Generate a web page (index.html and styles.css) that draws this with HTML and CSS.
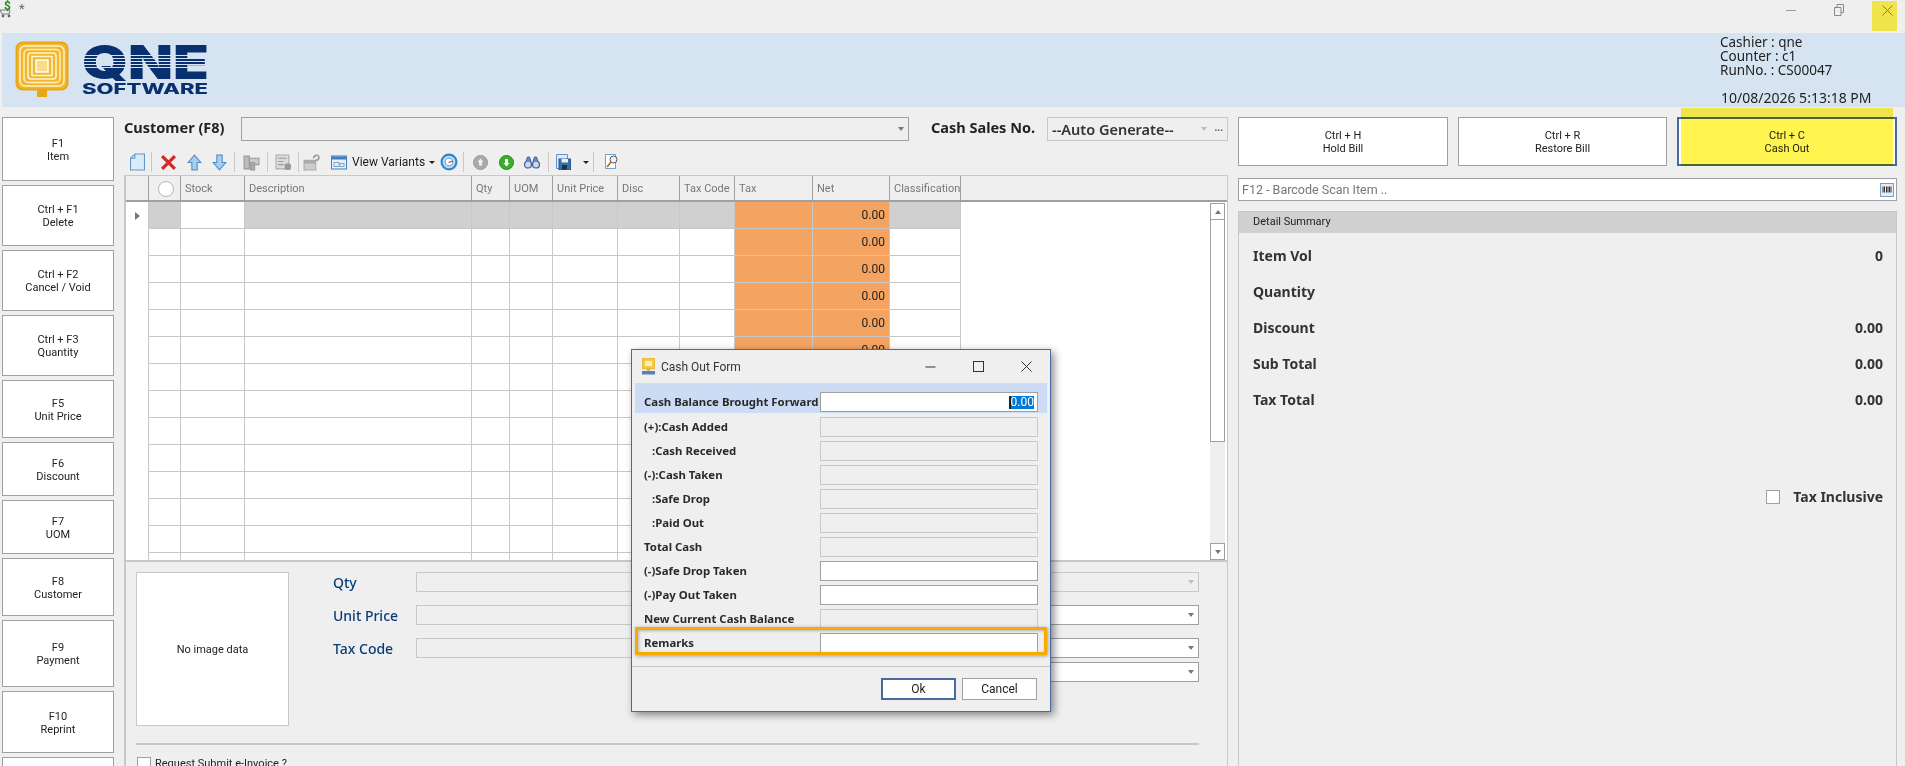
FILE: index.html

```html
<!DOCTYPE html>
<html lang="en">
<head>
  <meta charset="UTF-8" />
  <title>QNE Software - POS</title>
  <link rel="stylesheet" href="styles.css">
</head>
<body>

<div class="titlebar">
  <div class="app-icon">
    <svg width="14" height="16" viewBox="0 0 14 16"><path d="M0 8h10l-1 4H2z" fill="none" stroke="#777" stroke-width="1"/><circle cx="3" cy="14" r="1.400" fill="#666"/><circle cx="9" cy="14" r="1.400" fill="#666"/></svg>
    <span class="app-dollar">$</span>
  </div>
  <span class="star">*</span>
  <div class="win-btns">
    <svg class="win-min" width="10" height="10" viewBox="0 0 10 10"><path d="M0 5.500h10" stroke="#999" stroke-width="1"/></svg>
    <svg class="win-restore" width="10" height="12" viewBox="0 0 10 12"><path d="M.5 3.500h6.500v8H.5zM3 3.500V.5h6.500v8H7" fill="none" stroke="#888"/></svg>
    <svg class="win-close" width="11" height="11" viewBox="0 0 11 11"><path d="M.5.500l10 10M10.500.5l-10 10" stroke="#8a8a60" stroke-width="1"/></svg>
  </div>
</div>

<header class="banner">
  <svg class="logo" width="200" height="66" viewBox="0 0 200 66">
    <rect x="1.500" y="1.500" width="51" height="47" rx="6" fill="#f2b632" stroke="#e6a817" stroke-width="2"/>
    <rect x="5" y="5" width="44" height="40" rx="5" fill="none" stroke="#fff3c4" stroke-width="1.500"/>
    <rect x="9" y="8.500" width="36" height="33" rx="4" fill="none" stroke="#fdf0b8" stroke-width="1.500"/>
    <rect x="13" y="12" width="28" height="26" rx="3" fill="none" stroke="#fff6d0" stroke-width="1.500"/>
    <rect x="17" y="15.500" width="20" height="19" fill="none" stroke="#fff6d0" stroke-width="1.500"/>
    <rect x="21" y="19" width="12" height="12" fill="#f8dc88" stroke="#fff" stroke-width="1.500"/>
    <rect x="22" y="49" width="10" height="7" fill="#e6a817"/>
    <text class="logo-big" x="67" y="38" textLength="127" lengthAdjust="spacingAndGlyphs">QNE</text>
    <g fill="#d6e4f2">
      <rect x="67" y="14" width="127" height="1"/><rect x="67" y="17" width="127" height="1"/>
      <rect x="67" y="20" width="127" height="1"/><rect x="67" y="23" width="127" height="1"/>
      <rect x="67" y="26" width="127" height="1"/>
    </g>
    <text class="logo-small" x="67" y="53" textLength="126" lengthAdjust="spacingAndGlyphs">SOFTWARE</text>
  </svg>
  <div class="session">
    <div>Cashier : qne</div>
    <div>Counter : c1</div>
    <div>RunNo. : CS00047</div>
    <div class="session-time">10/08/2026 5:13:18 PM</div>
  </div>
</header>

<div class="workspace">

  <nav class="keys">
    <div class="key">F1<br>Item</div>
    <div class="key">Ctrl + F1<br>Delete</div>
    <div class="key">Ctrl + F2<br>Cancel / Void</div>
    <div class="key">Ctrl + F3<br>Quantity</div>
    <div class="key">F5<br>Unit Price</div>
    <div class="key">F6<br>Discount</div>
    <div class="key">F7<br>UOM</div>
    <div class="key">F8<br>Customer</div>
    <div class="key">F9<br>Payment</div>
    <div class="key">F10<br>Reprint</div>
    <div class="key"></div>
  </nav>

  <main class="center">
    <div class="customer-row">
      <label class="big-label customer-label">Customer (F8)</label>
      <div class="combo customer-combo"><i class="arrow"></i></div>
      <label class="big-label cash-label">Cash Sales No.</label>
      <div class="combo auto-combo">
        <span>--Auto Generate--</span>
        <i class="arrow arrow-dim"></i>
        <span class="dots">...</span>
      </div>
    </div>

    <div class="toolbar">
      <div class="tool t26"><svg width="15" height="18" viewBox="0 0 14 16"><path d="M4.500.5h9v15H.5V4.500z" fill="#dcebfa" stroke="#5f97cc"/><path d="M4.500.5v4h-4" fill="none" stroke="#5f97cc"/></svg></div>
      <i class="sep"></i>
      <div class="tool t30"><svg width="17" height="17" viewBox="0 0 16 16"><path d="M2 2l12 12M14 2L2 14" stroke="#cf2a27" stroke-width="3"/></svg></div>
      <div class="tool t22"><svg width="15" height="17" viewBox="0 0 14 16"><path d="M7 1l6 7H9.500v7h-5V8H1z" fill="#a9cdee" stroke="#4f8cc6"/></svg></div>
      <div class="tool t28"><svg width="15" height="17" viewBox="0 0 14 16"><path d="M7 15l6-7H9.500V1h-5v7H1z" fill="#a9cdee" stroke="#4f8cc6"/></svg></div>
      <i class="sep"></i>
      <div class="tool t30"><svg width="17" height="17" viewBox="0 0 16 16"><path d="M1 2h5v12H1z" fill="#bbb" stroke="#999"/><path d="M6 4h9v6H6z" fill="#ccc" stroke="#999"/><path d="M7 8h4v7H7z" fill="#aaa" stroke="#999"/></svg></div>
      <i class="sep"></i>
      <div class="tool t28"><svg width="17" height="17" viewBox="0 0 16 16"><path d="M1 1h12v13H1z" fill="#ddd" stroke="#aaa"/><path d="M3 4h8M3 7h5M3 10h5" stroke="#999"/><rect x="9" y="9" width="6" height="6" rx="1.500" fill="#999"/></svg></div>
      <i class="sep"></i>
      <div class="tool t24"><svg width="18" height="17" viewBox="0 0 17 16"><path d="M1 6h11v9H1z" fill="#ccc" stroke="#aaa"/><path d="M1 6h11v3H1z" fill="#aaa"/><path d="M10 4c0-3 5-4 5-1s-2 3-3 3" fill="none" stroke="#999" stroke-width="1.500"/></svg></div>
      <div class="tool variants">
        <svg width="16" height="15" viewBox="0 0 16 14"><rect x=".5" y=".5" width="15" height="13" fill="#e8f1fa" stroke="#3f7fbb"/><rect x="1" y="1" width="14" height="3" fill="#3f7fbb"/><rect x="3" y="7" width="5" height="4" fill="none" stroke="#7ba7cf"/><rect x="9" y="8" width="4" height="3" fill="none" stroke="#7ba7cf"/></svg>
        <span class="variants-text">View Variants</span>
        <i class="caret"></i>
      </div>
      <div class="tool t26"><svg width="18" height="18" viewBox="0 0 17 17"><circle cx="8.500" cy="8.500" r="7" fill="#bcdcf4" stroke="#2f86cc" stroke-width="2"/><circle cx="8.500" cy="8.500" r="3.500" fill="#fff" stroke="#6aa6d6"/><path d="M8 9l4-1.500" stroke="#c33" stroke-width="1"/></svg></div>
      <i class="sep"></i>
      <div class="tool t30"><svg width="15" height="15" viewBox="0 0 15 15"><circle cx="7.500" cy="7.500" r="7" fill="#aaa" stroke="#999"/><path d="M7.500 3.500l3 3.500H9v3.500H6V7H4.500z" fill="#eee"/></svg></div>
      <div class="tool t22"><svg width="15" height="15" viewBox="0 0 15 15"><circle cx="7.500" cy="7.500" r="7" fill="#3cab2e" stroke="#2a8a20"/><path d="M7.500 11.500l3-3.500H9V4H6v4H4.500z" fill="#fff"/></svg></div>
      <div class="tool t30"><svg width="16" height="13" viewBox="0 0 16 13"><circle cx="4" cy="8.500" r="3.500" fill="#c8d8ee" stroke="#3c5f96" stroke-width="1.200"/><circle cx="12" cy="8.500" r="3.500" fill="#c8d8ee" stroke="#3c5f96" stroke-width="1.200"/><path d="M2 6l1.500-5h2L7 6M14 6l-1.500-5h-2L9 6" fill="#6f8dbb" stroke="#3c5f96"/></svg></div>
      <i class="sep"></i>
      <div class="tool t26"><svg width="15" height="16" viewBox="0 0 15 16"><path d="M.5.500h11v14H.5z" fill="#dcebfa" stroke="#5f97cc"/><rect x="3" y="5" width="11.500" height="10.500" fill="#3a6ea5" stroke="#2d5b8b"/><rect x="5.500" y="5" width="6.500" height="3.500" fill="#e8eef5"/><rect x="6" y="11" width="5" height="4.500" fill="#16324f"/></svg></div>
      <div class="tool t16"><i class="caret"></i></div>
      <i class="sep"></i>
      <div class="tool t34"><svg width="14" height="16" viewBox="0 0 14 16"><path d="M.5.500h10v14H.5z" fill="#fff" stroke="#6ea3d3"/><circle cx="8.500" cy="5.500" r="3.500" fill="#f3f3e6" stroke="#556"/><path d="M6 8l-4 5" stroke="#b5762a" stroke-width="2"/></svg></div>
    </div>

    <div class="grid">
      <table class="lines">
        <colgroup>
          <col class="c-row"><col class="c-mark"><col class="c-stock"><col class="c-desc"><col class="c-qty"><col class="c-uom">
          <col class="c-price"><col class="c-disc"><col class="c-code"><col class="c-tax"><col class="c-net"><col class="c-class"><col>
        </colgroup>
        <thead>
          <tr><th></th><th><i class="mark"></i></th><th>Stock</th><th>Description</th><th>Qty</th><th>UOM</th><th>Unit Price</th><th>Disc</th><th>Tax Code</th><th>Tax</th><th>Net</th><th>Classification</th><th class="filler"></th></tr>
        </thead>
        <tbody>
          <tr class="current"><td class="rh"><i class="row-arrow"></i></td><td></td><td class="stock"></td><td></td><td></td><td></td><td></td><td></td><td></td><td class="o"></td><td class="o n">0.00</td><td></td><td class="filler"></td></tr>
          <tr><td class="rh"></td><td></td><td></td><td></td><td></td><td></td><td></td><td></td><td></td><td class="o"></td><td class="o n">0.00</td><td></td><td class="filler"></td></tr>
          <tr><td class="rh"></td><td></td><td></td><td></td><td></td><td></td><td></td><td></td><td></td><td class="o"></td><td class="o n">0.00</td><td></td><td class="filler"></td></tr>
          <tr><td class="rh"></td><td></td><td></td><td></td><td></td><td></td><td></td><td></td><td></td><td class="o"></td><td class="o n">0.00</td><td></td><td class="filler"></td></tr>
          <tr><td class="rh"></td><td></td><td></td><td></td><td></td><td></td><td></td><td></td><td></td><td class="o"></td><td class="o n">0.00</td><td></td><td class="filler"></td></tr>
          <tr><td class="rh"></td><td></td><td></td><td></td><td></td><td></td><td></td><td></td><td></td><td class="o"></td><td class="o n">0.00</td><td></td><td class="filler"></td></tr>
          <tr><td class="rh"></td><td></td><td></td><td></td><td></td><td></td><td></td><td></td><td></td><td class="o"></td><td class="o n">0.00</td><td></td><td class="filler"></td></tr>
          <tr><td class="rh"></td><td></td><td></td><td></td><td></td><td></td><td></td><td></td><td></td><td class="o"></td><td class="o n">0.00</td><td></td><td class="filler"></td></tr>
          <tr><td class="rh"></td><td></td><td></td><td></td><td></td><td></td><td></td><td></td><td></td><td class="o"></td><td class="o n">0.00</td><td></td><td class="filler"></td></tr>
          <tr><td class="rh"></td><td></td><td></td><td></td><td></td><td></td><td></td><td></td><td></td><td class="o"></td><td class="o n">0.00</td><td></td><td class="filler"></td></tr>
          <tr><td class="rh"></td><td></td><td></td><td></td><td></td><td></td><td></td><td></td><td></td><td class="o"></td><td class="o n">0.00</td><td></td><td class="filler"></td></tr>
          <tr><td class="rh"></td><td></td><td></td><td></td><td></td><td></td><td></td><td></td><td></td><td class="o"></td><td class="o n">0.00</td><td></td><td class="filler"></td></tr>
          <tr><td class="rh"></td><td></td><td></td><td></td><td></td><td></td><td></td><td></td><td></td><td class="o"></td><td class="o n">0.00</td><td></td><td class="filler"></td></tr>
          <tr><td class="rh"></td><td></td><td></td><td></td><td></td><td></td><td></td><td></td><td></td><td class="o"></td><td class="o"></td><td></td><td class="filler"></td></tr>
        </tbody>
      </table>
      <div class="scrollbar">
        <div class="scroll-btn"><i class="arrow-up"></i></div>
        <div class="scroll-thumb"></div>
        <div class="scroll-track"></div>
        <div class="scroll-btn"><i class="arrow"></i></div>
      </div>
    </div>

    <section class="lower">
      <div class="lower-top">
        <div class="no-image">No image data</div>
        <div class="fields">
          <div class="field-row">
            <label class="field-label">Qty</label>
            <div class="box off wide"><i class="arrow arrow-dim"></i></div>
          </div>
          <div class="field-row">
            <label class="field-label">Unit Price</label>
            <div class="box off half"></div>
            <div class="box half-right"><i class="arrow"></i></div>
          </div>
          <div class="field-row">
            <label class="field-label">Tax Code</label>
            <div class="box off half"></div>
            <div class="box half-right"><i class="arrow"></i></div>
          </div>
          <div class="field-row field-row-tight">
            <div class="box half-right"><i class="arrow"></i></div>
          </div>
        </div>
      </div>
      <hr class="lower-line">
      <div class="einvoice"><i class="check"></i><span>Request Submit e-Invoice ?</span></div>
    </section>
  </main>

  <aside class="side">
    <div class="side-keys">
      <div class="key hold">Ctrl + H<br>Hold Bill</div>
      <div class="key restore">Ctrl + R<br>Restore Bill</div>
      <div class="key cash-out">Ctrl + C<br>Cash Out</div>
    </div>
    <div class="barcode">
      <span>F12 - Barcode Scan Item ..</span>
      <svg width="14" height="14" viewBox="0 0 14 14"><rect x=".5" y=".5" width="13" height="13" fill="#e4ecf6" stroke="#7f9cc4"/><path d="M3 3.500v6M4.500 3.500v6M6.500 3.500v6M8 3.500v6M9.500 3.500v6M11 3.500v6" stroke="#333"/></svg>
    </div>
    <section class="summary">
      <div class="summary-head">Detail Summary</div>
      <div class="summary-body">
        <div class="sum-row"><span>Item Vol</span><span>0</span></div>
        <div class="sum-row"><span>Quantity</span><span></span></div>
        <div class="sum-row"><span>Discount</span><span>0.00</span></div>
        <div class="sum-row"><span>Sub Total</span><span>0.00</span></div>
        <div class="sum-row"><span>Tax Total</span><span>0.00</span></div>
        <div class="tax-inc"><i class="check"></i><span>Tax Inclusive</span></div>
      </div>
    </section>
  </aside>
</div>

<div class="dialog">
  <div class="dialog-title">
    <svg width="13" height="17" viewBox="0 0 13 17"><rect x="0" y="0" width="13" height="11" rx="1" fill="#f2c84b" stroke="#d9a520" stroke-width=".6"/><rect x="3" y="3" width="7" height="5" fill="#fbeeb0"/><rect x="5" y="11" width="3" height="1.500" fill="#d9a520"/><rect x="0" y="13" width="13" height="3.500" fill="#5b7fae"/></svg>
    <span>Cash Out Form</span>
    <div class="dialog-btns">
      <svg width="11" height="11" viewBox="0 0 11 11"><path d="M.5 6h10" stroke="#333"/></svg>
      <svg width="11" height="11" viewBox="0 0 11 11"><rect x=".5" y=".5" width="10" height="10" fill="none" stroke="#333"/></svg>
      <svg width="11" height="11" viewBox="0 0 11 11"><path d="M.5.500l10 10M10.500.5l-10 10" stroke="#333"/></svg>
    </div>
  </div>
  <div class="form">
    <div class="form-row active"><label>Cash Balance Brought Forward</label><div class="inp on"><span class="selected">0.00</span></div></div>
    <div class="form-row"><label>(+):Cash Added</label><div class="inp"></div></div>
    <div class="form-row"><label class="sub">:Cash Received</label><div class="inp"></div></div>
    <div class="form-row"><label>(-):Cash Taken</label><div class="inp"></div></div>
    <div class="form-row"><label class="sub">:Safe Drop</label><div class="inp"></div></div>
    <div class="form-row"><label class="sub">:Paid Out</label><div class="inp"></div></div>
    <div class="form-row"><label>Total Cash</label><div class="inp"></div></div>
    <div class="form-row"><label>(-)Safe Drop Taken</label><div class="inp on"></div></div>
    <div class="form-row"><label>(-)Pay Out Taken</label><div class="inp on"></div></div>
    <div class="form-row"><label>New Current Cash Balance</label><div class="inp"></div></div>
    <div class="form-row"><label>Remarks</label><div class="inp on"></div></div>
    <div class="remarks-mark"></div>
  </div>
  <div class="dialog-foot">
    <button class="btn btn-ok">Ok</button>
    <button class="btn">Cancel</button>
  </div>
</div>

<div class="mark-yellow mark-button"></div>
<div class="mark-yellow mark-close"></div>

</body>
</html>
```

FILE: styles.css

```css
* { margin: 0; padding: 0; box-sizing: border-box; }
html, body { height: 766px; overflow: hidden; }
body {
  background: #efefef;
  color: #222;
  font-family: Roboto, "Noto Sans", sans-serif;
  font-size: 11px;
  position: relative;
}
i { display: block; }

/* top strip */
.titlebar {
  height: 33px;
  display: flex;
  position: relative;
}
.app-icon { position: relative; width: 14px; height: 16px; margin-top: 2px; }
.app-dollar {
  position: absolute; left: 4px; top: -3px;
  color: #1d8f1d; font-weight: 700; font-size: 12px;
}
.star { margin-left: 5px; margin-top: 1px; color: #666; font-size: 13px; }
.win-btns { position: absolute; top: 0; left: 0; }
.win-min { position: absolute; left: 1786px; top: 5px; }
.win-restore { position: absolute; left: 1834px; top: 4px; }
.win-close { position: absolute; left: 1882px; top: 5px; }

.banner {
  height: 74px;
  margin-left: 2px;
  background: #d6e4f2;
  display: flex;
  justify-content: space-between;
  padding-left: 13px;
  padding-top: 8px;
}
.logo { overflow: visible; }
.logo-big { font-family: Inter, sans-serif; font-weight: 900; font-size: 47px; fill: #0a2f6e; }
.logo-small { font-family: Inter, sans-serif; font-weight: 800; font-size: 14px; fill: #0a2f6e; }
.session {
  width: 185px;
  font-family: "Noto Sans", sans-serif;
  font-size: 13.5px;
  line-height: 14px;
  color: #222;
  margin-top: -7px;
  padding-top: 1px;
}
.session-time { margin-top: 14px; font-size: 14px; margin-left: 1px; white-space: nowrap; }

.workspace {
  display: grid;
  grid-template-columns: 112px 1104px 659px;
  column-gap: 10px;
  padding: 10px 0 0 2px;
  height: 659px;
  overflow: hidden;
}

/* function keys */
.keys {
  display: grid;
  grid-template-rows: 64px 61px 61px 61px 58px 54px 54px 58px 67px 62px 60px;
  row-gap: 4px;
  height: 649px;
  overflow: hidden;
}
.key {
  background: #fff;
  border: 1px solid #a0a0a0;
  padding-top: 1px;
  display: flex;
  align-items: center;
  justify-content: center;
  text-align: center;
  line-height: 13px;
}

/* centre */
.center { display: flex; flex-direction: column; min-width: 0; height: 649px; }
.customer-row { display: flex; align-items: flex-start; height: 24px; }
.big-label { font-family: "Noto Sans", sans-serif; font-weight: 700; font-size: 14.5px; color: #222; white-space: nowrap; }
.customer-label { width: 117px; line-height: 21px; }
.customer-combo { width: 668px; }
.cash-label { width: 138px; padding-left: 22px; line-height: 20px; }
.combo {
  height: 24px;
  border: 1px solid #a0a0a0;
  display: flex;
  align-items: center;
  justify-content: flex-end;
  padding-right: 4px;
}
.auto-combo {
  width: 181px;
  border-color: #c8c8c8;
  justify-content: flex-start;
  padding-left: 4px;
  font-family: "Noto Sans", sans-serif;
  font-size: 14.5px;
  font-weight: 600;
  color: #333;
}
.auto-combo .arrow { margin-left: auto; margin-right: 8px; }
.dots { font-size: 10px; color: #666; font-weight: 700; line-height: 10px; margin-bottom: 4px; }
.arrow { width: 0; height: 0; border: 3.500px solid transparent; border-top: 4px solid #777; border-bottom: 0; }
.arrow-dim { border-top-color: #bbb; }
.arrow-up { width: 0; height: 0; border: 3.500px solid transparent; border-bottom: 4px solid #777; border-top: 0; }

.toolbar { height: 26px; margin-top: 8px; display: flex; align-items: center; }
.tool { display: flex; align-items: center; justify-content: center; height: 24px; }
.t16 { width: 16px; }
.t22 { width: 22px; }
.t24 { width: 24px; }
.t26 { width: 26px; }
.t28 { width: 28px; }
.t30 { width: 30px; }
.t34 { width: 34px; }
.sep { width: 1px; height: 20px; background: #c8c8c8; margin: 0 1px; }
.variants { width: 112px; justify-content: flex-start; padding-left: 7px; }
.variants-text { margin-left: 5px; font-size: 12px; white-space: nowrap; }
.caret { width: 0; height: 0; margin-left: 4px; border: 3px solid transparent; border-top: 3px solid #222; border-bottom: 0; }

.grid {
  height: 387px;
  flex: none;
  border: 1px solid #c8c8c8;
  border-width: 1px 1px 2px 2px;
  position: relative;
  overflow: hidden;
  background: #fff;
}
.lines { width: 100%; border-collapse: separate; border-spacing: 0; table-layout: fixed; }
.c-row { width: 23px; }
.c-mark { width: 32px; }
.c-stock { width: 64px; }
.c-desc { width: 227px; }
.c-qty { width: 38px; }
.c-uom { width: 43px; }
.c-price { width: 65px; }
.c-disc { width: 62px; }
.c-code { width: 55px; }
.c-tax { width: 78px; }
.c-net { width: 77px; }
.c-class { width: 71px; }
.lines th {
  height: 26px;
  background: #efefef;
  border-right: 1px solid #a0a0a0;
  border-bottom: 2px solid #a0a0a0;
  color: #777;
  font-weight: 400;
  font-size: 11px;
  text-align: left;
  padding: 1px 0 0 4px;
  white-space: nowrap;
  overflow: hidden;
}
.lines th.filler { border-right: 0; }
.mark {
  width: 16px; height: 16px;
  border: 1px solid #b5b5b5;
  border-radius: 50%;
  background: #fff;
  margin-left: 5px;
}
.lines td {
  height: 27px;
  border-right: 1px solid #c8c8c8;
  border-bottom: 1px solid #c8c8c8;
  padding: 0 4px;
  font-size: 12px;
}
.lines td.rh { border-bottom: 0; }
.lines td.filler { border: 0; }
.current td { background: #d0d0d0; }
.current td.rh, .current td.filler, .current td.stock { background: #fff; }
.lines td.o { background: #f4a460; }
.n { text-align: right; }
.row-arrow {
  width: 0; height: 0; margin-left: 5px;
  border: 4px solid transparent;
  border-left: 5px solid #777;
  border-right: 0;
}

.scrollbar {
  position: absolute;
  top: 27px; bottom: 0; right: 2px;
  width: 15px;
  display: flex;
  flex-direction: column;
  background: #efefef;
}
.scroll-btn {
  height: 17px;
  background: #fff;
  border: 1px solid #a0a0a0;
  display: flex;
  align-items: center;
  justify-content: center;
  flex: none;
}
.scroll-thumb { height: 222px; flex: none; background: #fff; border: 1px solid #a0a0a0; border-top: 0; }
.scroll-track { flex: 1; }

.lower {
  flex: 1;
  border-left: 2px solid #c8c8c8;
  border-right: 1px solid #c8c8c8;
  padding: 10px 0 0 10px;
  overflow: hidden;
}
.lower-top { display: flex; height: 154px; }
.no-image {
  width: 153px; height: 154px;
  background: #fff;
  border: 1px solid #c8c8c8;
  display: flex; align-items: center; justify-content: center;
}
.fields { margin-left: 44px; display: flex; flex-direction: column; gap: 13px; }
.field-row { display: flex; height: 20px; align-items: center; }
.field-row-tight { margin-top: -9px; margin-left: 473px; }
.field-label { width: 83px; color: #0b3b78; font-family: "Noto Sans", sans-serif; font-size: 14px; font-weight: 500; }
.box {
  height: 20px;
  border: 1px solid #a0a0a0;
  background: #fff;
  display: flex; align-items: center; justify-content: flex-end;
  padding-right: 4px;
}
.box.off { background: #efefef; border-color: #c8c8c8; }
.wide { width: 783px; }
.half { width: 384px; margin-right: 6px; }
.half-right { width: 393px; }
.lower-line { border: 0; border-top: 2px solid #c8c8c8; margin-top: 17px; width: 1063px; }
.einvoice { display: flex; gap: 4px; margin-top: 12px; margin-left: 1px; }
.check { width: 14px; height: 14px; border: 1px solid #a0a0a0; background: #fff; flex: none; }

/* right side */
.side { display: flex; flex-direction: column; min-width: 0; height: 649px; }
.side-keys { display: flex; gap: 10px; height: 49px; flex: none; }
.hold { width: 210px; }
.restore { width: 209px; }
.cash-out { width: 220px; border: 2px solid #4a6a9f; }
.barcode {
  height: 23px;
  flex: none;
  margin-top: 12px;
  background: #fff;
  border: 1px solid #a0a0a0;
  color: #777;
  font-size: 12.5px;
  display: flex; align-items: center; justify-content: space-between;
  padding: 0 2px 0 3px;
}
.summary {
  flex: 1;
  margin-top: 10px;
  border: 1px solid #c8c8c8;
  border-bottom: 0;
}
.summary-head {
  height: 21px;
  background: #d0d0d0;
  padding-left: 14px;
  line-height: 20px;
}
.summary-body { padding: 11px 13px 0 14px; font-family: "Noto Sans", sans-serif; }
.sum-row {
  display: flex; justify-content: space-between;
  height: 36px; line-height: 24px;
  font-size: 14px; font-weight: 700;
  color: #333;
}
.tax-inc {
  display: flex; align-items: center; justify-content: flex-end; gap: 13px;
  margin-top: 63px;
  font-size: 14px; font-weight: 700; color: #333;
}

/* cash out dialog */
.dialog {
  position: absolute;
  left: 631px; top: 349px;
  width: 420px; height: 363px;
  background: #efefef;
  border: 1px solid #4a6a9f;
  box-shadow: 3px 3px 8px rgba(0,0,0,0.45);
}
.dialog-title {
  height: 33px;
  display: flex; align-items: center;
  padding-left: 10px;
  font-size: 12px;
  color: #333;
}
.dialog-title span { margin-left: 6px; }
.dialog-btns { margin-left: auto; display: flex; gap: 37px; padding-right: 18px; }
.form { position: relative; padding: 0 3px; display: flex; flex-direction: column; gap: 4px; }
.form-row { display: flex; align-items: center; height: 20px; padding-left: 9px; }
.form-row label { width: 176px; padding-bottom: 2px; font-family: "Noto Sans", sans-serif; font-size: 11.4px; font-weight: 700; color: #2a2a2a; white-space: nowrap; }
.form-row label.sub { padding-left: 8px; }
.form-row.active { height: 30px; background: #cddcf5; padding-top: 9px; padding-bottom: 1px; }
.inp { width: 218px; height: 20px; border: 1px solid #c8c8c8; display: flex; justify-content: flex-end; align-items: center; }
.inp.on { background: #fff; border-color: #a0a0a0; }
.selected {
  background: #0078d7; color: #fff;
  border-left: 2px solid #222;
  font-size: 12px; line-height: 13px;
  margin-right: 3px;
}
.remarks-mark {
  position: absolute;
  left: 3px; right: 3px; top: 244px;
  height: 28px;
  border: 3px solid #f5ab00;
  box-shadow: 1px 1px 4px rgba(0,0,0,0.35), inset 1px 1px 3px rgba(0,0,0,0.25);
}
.dialog-foot {
  margin-top: 13px;
  border-top: 1px solid #c8c8c8;
  display: flex; justify-content: flex-end; gap: 6px;
  padding: 11px 13px 0 0;
}
.btn {
  width: 75px; height: 22px;
  background: #fff;
  border: 1px solid #a0a0a0;
  font-family: Roboto, sans-serif;
  font-size: 12px;
  color: #222;
}
.btn-ok { border: 2px solid #4a6a9f; }

/* yellow marker pen over the picture */
.mark-yellow { position: absolute; background: #fff450; mix-blend-mode: multiply; }
.mark-button { left: 1681px; top: 108px; width: 212px; height: 58px; }
.mark-close { left: 1872px; top: 1px; width: 25px; height: 30px; }
```
